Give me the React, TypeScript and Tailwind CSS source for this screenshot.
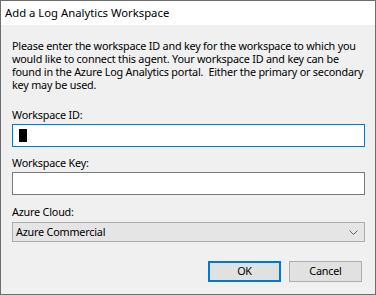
export default function App() {
  return (
    <div
      className="w-[376px] h-[295px] border border-[#6d6d6d] bg-[#f0f0f0] flex flex-col text-[10.8px] tracking-[-0.2px] text-black"
      style={{ fontFamily: '"Segoe UI", "Noto Sans", "Open Sans", sans-serif' }}
    >
      {/* Title bar */}
      <div className="h-[24px] bg-white flex items-center pl-[4px] shrink-0">
        <span className="leading-none text-[11.3px] tracking-normal">Add a Log Analytics Workspace</span>
      </div>

      {/* Body */}
      <div className="flex flex-col px-[11px] pt-[14px]">
        <p className="leading-[13px] whitespace-nowrap">
          Please enter the workspace ID and key for the workspace to which you
          <br />
          would like to connect this agent. Your workspace ID and key can be
          <br />
          found in the Azure Log Analytics portal.&nbsp; Either the primary or secondary
          <br />
          key may be used.
        </p>

        <label className="mt-[17px] leading-[14px]">Workspace ID:</label>
        <div className="mt-[2px] h-[23px] w-[353px] bg-white border border-[#0078d7] flex items-center pl-[6px]">
          <span className="block w-[8px] h-[13px] bg-black" />
        </div>

        <label className="mt-[9px] leading-[14px]">Workspace Key:</label>
        <div className="mt-[2px] h-[23px] w-[353px] bg-white border border-[#7a7a7a]" />

        <label className="mt-[10px] leading-[14px]">Azure Cloud:</label>
        <div className="mt-[3px] h-[20px] w-[353px] bg-[#e5e5e5] border border-[#adadad] flex items-center justify-between pl-[3px] pr-[5px]">
          <span>Azure Commercial</span>
          <svg width="9" height="5" viewBox="0 0 9 5" className="mr-[1px]">
            <path d="M0.5 0.5 L4.5 4.5 L8.5 0.5" fill="none" stroke="#606060" strokeWidth="1" />
          </svg>
        </div>

        <div className="mt-[19px] flex justify-end gap-[8px] pr-[2px]">
          <button className="w-[73px] h-[21px] bg-[#e1e1e1] border-2 border-[#0078d7] leading-none">OK</button>
          <button className="w-[73px] h-[21px] bg-[#e1e1e1] border border-[#adadad] leading-none">Cancel</button>
        </div>
      </div>
    </div>
  )
}
